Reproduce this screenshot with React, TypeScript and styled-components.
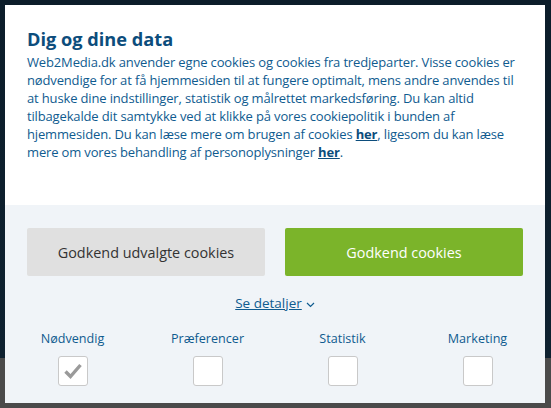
import React from 'react';
import styled, { createGlobalStyle } from 'styled-components';

const GlobalStyle = createGlobalStyle`
  html, body {
    margin: 0;
    padding: 0;
  }
  body {
    width: 551px;
    height: 408px;
    overflow: hidden;
    font-family: 'Open Sans', 'Noto Sans', sans-serif;
    background: linear-gradient(180deg, #0c1d2a 0, #0e2130 358px, #4a4a4a 358px, #4a4a4a 100%);
  }
`;

const Page = styled.div`
  padding: 5px;
`;

const Dialog = styled.div`
  width: 540px;
  height: 398px;
  display: flex;
  flex-direction: column;
  background: #f0f4f8;
`;

const Intro = styled.section`
  background: #ffffff;
  height: 200px;
  box-sizing: border-box;
  padding: 22px 22px 0 22px;
`;

const Title = styled.h2`
  margin: 0 0 2px 0;
  font-size: 18.2px;
  line-height: 24px;
  font-weight: 700;
  color: #0c4d7c;
`;

const Text = styled.p`
  margin: 0;
  font-size: 13px;
  letter-spacing: -0.15px;
  line-height: 18px;
  color: #0f5b8f;
  white-space: nowrap;
`;

const Link = styled.a`
  color: #0c4d7c;
  font-weight: 700;
  text-decoration: underline;
`;

const Controls = styled.section`
  flex: 1;
  padding: 23px 22px 0 22px;
  display: flex;
  flex-direction: column;
  align-items: center;
`;

const Buttons = styled.div`
  width: 100%;
  display: grid;
  grid-template-columns: 1fr 1fr;
  gap: 20px;
`;

const Button = styled.button<{ $primary?: boolean }>`
  height: 48px;
  border: none;
  border-radius: 2px;
  font-family: inherit;
  font-size: 14.4px;
  background: ${(p) => (p.$primary ? '#7bb42a' : '#e0e0e0')};
  color: ${(p) => (p.$primary ? '#ffffff' : '#333333')};
  cursor: pointer;
`;

const Details = styled.a`
  margin-top: 17px;
  font-size: 13.5px;
  line-height: 20px;
  color: #0f5b8f;
  text-decoration: underline;
  display: flex;
  align-items: center;
  gap: 4px;
`;

const Chevron = styled.svg`
  width: 9px;
  height: 6px;
  margin-top: 3px;
`;

const Options = styled.div`
  align-self: stretch;
  margin: 17px -22px 0 -22px;
  display: grid;
  grid-template-columns: repeat(4, 1fr);
`;

const Option = styled.label`
  display: flex;
  flex-direction: column;
  align-items: center;
  gap: 8px;
  font-size: 12.6px;
  line-height: 18px;
  color: #0f5b8f;
`;

const Box = styled.span`
  width: 28px;
  height: 28px;
  border: 1px solid #c9c9c9;
  border-radius: 3px;
  background: #ffffff;
  display: flex;
  align-items: center;
  justify-content: center;
`;

const options = [
  { title: 'Nødvendig', checked: true },
  { title: 'Præferencer', checked: false },
  { title: 'Statistik', checked: false },
  { title: 'Marketing', checked: false },
];

const App: React.FC = () => {
  return (
    <Page>
      <GlobalStyle />
      <Dialog>
        <Intro>
          <Title>Dig og dine data</Title>
          <Text>
            Web2Media.dk anvender egne cookies og cookies fra tredjeparter. Visse cookies er
            <br />
            nødvendige for at få hjemmesiden til at fungere optimalt, mens andre anvendes til
            <br />
            at huske dine indstillinger, statistik og målrettet markedsføring. Du kan altid
            <br />
            tilbagekalde dit samtykke ved at klikke på vores cookiepolitik i bunden af
            <br />
            hjemmesiden. Du kan læse mere om brugen af cookies <Link>her</Link>, ligesom du kan læse
            <br />
            mere om vores behandling af personoplysninger <Link>her</Link>.
          </Text>
        </Intro>
        <Controls>
          <Buttons>
            <Button>Godkend udvalgte cookies</Button>
            <Button $primary>Godkend cookies</Button>
          </Buttons>
          <Details>
            Se detaljer
            <Chevron viewBox="0 0 9 6">
              <path d="M1 1 L4.5 4.5 L8 1" fill="none" stroke="#0f5b8f" strokeWidth="1.2" />
            </Chevron>
          </Details>
          <Options>
            {options.map((option) => (
              <Option key={option.title}>
                {option.title}
                <Box>
                  {option.checked && (
                    <svg width="18" height="16" viewBox="0 0 18 16">
                      <path d="M1.5 8.5 L6.5 13.5 L16.5 2" fill="none" stroke="#9a9a9a" strokeWidth="3.4" />
                    </svg>
                  )}
                </Box>
              </Option>
            ))}
          </Options>
        </Controls>
      </Dialog>
    </Page>
  );
};

export default App;
